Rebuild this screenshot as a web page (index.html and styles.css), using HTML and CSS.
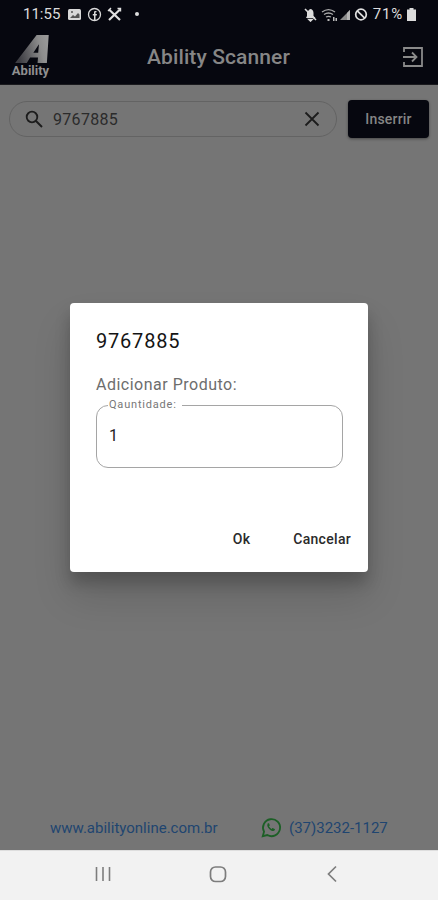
FILE: index.html
```html
<!DOCTYPE html>
<html lang="en">
<head>
    <meta charset="UTF-8">
    <title>Ability Scanner</title>
    <link rel="stylesheet" href="styles.css">
</head>
<body>
    <div class="screen">
        <div class="status-bar">
            <div class="status-left">
                <span class="clock">11:55</span>
                <svg class="st-icon" width="15" height="15" viewBox="0 0 15 15"><rect x="1" y="2" width="13" height="11" rx="1.500" fill="#d8d8d8"/><path d="M3 11l3-3 2 1.500L11 6l1.500 1.500V11z" fill="#555"/><circle cx="5" cy="5" r="1" fill="#555"/></svg>
                <svg class="st-icon" width="15" height="15" viewBox="0 0 15 15"><circle cx="7.500" cy="7.500" r="6" fill="none" stroke="#d8d8d8" stroke-width="1.300"/><path d="M9.500 4H8.200C7.400 4 7 4.600 7 5.300V7H5.800v1.600H7V13h1.500V8.600h1.200L10 7H8.500V5.600c0-.3.2-.4.500-.4h.5z" fill="#d8d8d8"/></svg>
                <svg class="st-icon" width="15" height="15" viewBox="0 0 15 15"><path d="M2 2.500L13 13M13 2.500L2 13" stroke="#e0e0e0" stroke-width="2.200"/><path d="M1 4l3-3M10.500 1.500h3v3" stroke="#e0e0e0" stroke-width="1.400" fill="none"/></svg>
                <span class="dot"></span>
            </div>
            <div class="status-right">
                <svg class="st-icon" width="15" height="15" viewBox="0 0 15 15"><path d="M7 2c2.400 0 3.500 1.700 3.500 4v3l2 2H3l1-2V5z" fill="#dcdcdc"/><path d="M6 12.500h3l-1.500 1.500zM2 2l11 11" stroke="#dcdcdc" stroke-width="1.600"/></svg>
                <svg class="st-icon wifi" width="16" height="15" viewBox="0 0 16 15"><path d="M1 5c4-3 9-3 13 0M3 7.500c3-2 6-2 9 0M5 10c2-1 3-1 5 0" stroke="#aaa" stroke-width="1.300" fill="none"/><path d="M6.500 12h2v2h-2zM12 10h1.500v4H12zM14.500 11H16v3h-1.500z" fill="#bbb"/></svg>
                <svg class="st-icon" width="11" height="15" viewBox="0 0 11 15"><path d="M0 13L10 3v10z" fill="#8c8c8c"/><path d="M7 6l3-3v10H7z" fill="#b5b5b5"/></svg>
                <svg class="st-icon" width="14" height="15" viewBox="0 0 14 15"><circle cx="7" cy="7.500" r="5.300" fill="none" stroke="#e0e0e0" stroke-width="1.700"/><path d="M3.300 3.800l7.400 7.400" stroke="#e0e0e0" stroke-width="1.700"/></svg>
                <span class="battery-text">71%</span>
                <svg class="st-icon" width="11" height="15" viewBox="0 0 11 15"><path d="M3.500 1h4v1.500H10V14H1V2.500h2.500z" fill="#dcdcdc"/></svg>
            </div>
        </div>

        <header class="app-bar">
            <div class="logo">
                <svg width="40" height="28" viewBox="0 0 40 30"><defs><linearGradient id="logoFade" x1="0" x2="1" y1="0.300" y2="0.100"><stop offset="0" stop-color="#3c3c42"/><stop offset="0.700" stop-color="#8d8d8d"/><stop offset="1" stop-color="#9b9b9b"/></linearGradient></defs><path d="M26 0h13l-2 30H27l.5-6H19l-3.500 6H3zM28.500 10l-6 9h5.200z" fill="url(#logoFade)" fill-rule="evenodd"/></svg>
                <span class="logo-text">Ability</span>
            </div>
            <h1 class="app-title">Ability Scanner</h1>
            <svg class="exit-icon" width="24" height="24" viewBox="0 0 24 24"><path d="M4 7V3h18v18H4v-4" fill="none" stroke="#8a8a8a" stroke-width="1.800"/><path d="M3 12h13M12 7.500l4.500 4.500-4.500 4.500" fill="none" stroke="#8a8a8a" stroke-width="1.800"/></svg>
        </header>

        <div class="search-row">
            <div class="search-box">
                <svg class="search-icon" width="20" height="20" viewBox="0 0 20 20"><circle cx="8" cy="8" r="5.300" fill="none" stroke="#1c1c1c" stroke-width="1.800"/><path d="M12 12l6 6" stroke="#1c1c1c" stroke-width="2"/></svg>
                <span class="search-value">9767885</span>
                <svg class="clear-icon" width="16" height="16" viewBox="0 0 16 16"><path d="M1.500 1.500l13 13M14.500 1.500l-13 13" stroke="#1c1c1c" stroke-width="1.800"/></svg>
            </div>
            <button class="insert-btn">Inserrir</button>
        </div>

        <div class="content"></div>

        <footer class="contact">
            <span class="site">www.abilityonline.com.br</span>
            <span class="phone">
                <svg width="22" height="22" viewBox="0 0 24 24"><path d="M3 21l1.400-5A9.300 9.300 0 1 1 8 19.700z" fill="none" stroke="#1c5f26" stroke-width="2"/><path d="M8.800 7.200c-.8.700-1.100 1.700-.7 2.800.8 2.200 2.800 4.300 5.200 5.200 1.200.4 2.300 0 2.900-.9.300-.5.200-1-.2-1.200l-1.700-.9c-.4-.2-.7-.1-.9.200l-.6.700c-1.300-.5-2.400-1.600-3-2.900l.6-.6c.3-.3.300-.6.200-.9l-.7-1.500c-.3-.5-1.500-.5-2.100 0z" fill="#1c5f26"/></svg>
                <span>(37)3232-1127</span>
            </span>
        </footer>

        <nav class="nav-bar">
            <svg width="18" height="18" viewBox="0 0 18 18"><path d="M2.500 2v14M9 2v14M15.500 2v14" stroke="#7d7d7d" stroke-width="1.600"/></svg>
            <svg width="18" height="18" viewBox="0 0 18 18"><rect x="1.500" y="2" width="15" height="14.500" rx="5" fill="none" stroke="#7d7d7d" stroke-width="1.700"/></svg>
            <svg width="18" height="18" viewBox="0 0 18 18"><path d="M13 1.500L5.500 9l7.500 7.500" fill="none" stroke="#7d7d7d" stroke-width="1.700"/></svg>
        </nav>

        <!-- Add product dialog -->
        <div class="dialog">
            <div class="dialog-title">9767885</div>
            <div class="dialog-label">Adicionar Produto:</div>
            <fieldset class="qty-field">
                <legend>Qauntidade:</legend>
                <span class="qty-value">1</span>
            </fieldset>
            <div class="dialog-actions">
                <button class="text-btn">Ok</button>
                <button class="text-btn">Cancelar</button>
            </div>
        </div>
    </div>
</body>
</html>
```

FILE: styles.css
```css
* {
    box-sizing: border-box;
}

body {
    margin: 0;
    font-family: Roboto, 'Liberation Sans', sans-serif;
    background: #757575;
}

.screen {
    position: relative;
    width: 438px;
    height: 900px;
    display: flex;
    flex-direction: column;
    background: #757575;
    overflow: hidden;
}

.status-bar {
    height: 30px;
    flex-shrink: 0;
    display: flex;
    justify-content: space-between;
    align-items: center;
    padding: 0 21px 2px 23px;
    background: #06070f;
    color: #dcdcdc;
}

.status-left,
.status-right {
    display: flex;
    align-items: center;
}

.status-left {
    gap: 5px;
}

.status-right {
    gap: 3px;
}

.clock {
    font-size: 15px;
    margin-right: 2px;
}

.dot {
    width: 4px;
    height: 4px;
    margin-left: 8px;
    border-radius: 50%;
    background: #dcdcdc;
}

.battery-text {
    font-size: 15px;
    letter-spacing: 0.8px;
    margin-left: 2px;
}

.app-bar {
    height: 55px;
    flex-shrink: 0;
    display: flex;
    align-items: center;
    justify-content: space-between;
    padding: 0 14px 0 10px;
    background: #06070f;
    border-bottom: 1px solid #1a1a1e;
}

.logo {
    width: 41px;
    display: flex;
    flex-direction: column;
    align-items: center;
    margin-top: -2px;
}

.logo svg {
    display: block;
}

.logo-text {
    margin-top: 1px;
    font-size: 13px;
    line-height: 13px;
    font-weight: 700;
    color: #8f8f8f;
}

.app-title {
    margin: 0 14px 0 0;
    font-size: 21px;
    font-weight: 500;
    letter-spacing: 0.1px;
    color: #868686;
}

.exit-icon {
    display: block;
}

.search-row {
    display: flex;
    align-items: center;
    gap: 11px;
    padding: 15px 9px 0 9px;
}

.search-box {
    width: 328px;
    height: 36px;
    display: flex;
    align-items: center;
    padding: 0 16px 0 14px;
    border: 1px solid #636363;
    border-radius: 18px;
}

.search-value {
    flex: 1;
    margin-left: 9px;
    font-size: 16px;
    letter-spacing: 0.3px;
    color: #2b2b2b;
}

.insert-btn {
    width: 81px;
    height: 38px;
    border: none;
    border-radius: 4px;
    background: #06070f;
    color: #858585;
    font-family: inherit;
    font-size: 14px;
    font-weight: 500;
    letter-spacing: 0.2px;
    box-shadow: 0 1px 3px rgba(0, 0, 0, 0.4);
}

.content {
    flex: 1;
}

.contact {
    height: 44px;
    flex-shrink: 0;
    display: flex;
    align-items: center;
    padding: 0 0 0 50px;
    font-size: 15px;
    color: #1f4570;
}

.site {
    width: 210px;
}

.phone {
    display: flex;
    align-items: center;
    gap: 7px;
}

.nav-bar {
    height: 50px;
    flex-shrink: 0;
    display: flex;
    justify-content: space-between;
    align-items: center;
    padding: 0 97px 4px 94px;
    background: #f2f2f2;
    border-top: 1px solid #dedede;
}

.dialog {
    position: absolute;
    left: 70px;
    top: 303px;
    width: 298px;
    height: 269px;
    padding: 26px 26px 0 26px;
    border-radius: 4px;
    background: #fff;
    box-shadow: 0 11px 15px rgba(0, 0, 0, 0.2), 0 24px 38px rgba(0, 0, 0, 0.14);
}

.dialog-title {
    font-size: 20px;
    line-height: 24px;
    letter-spacing: 0.8px;
    color: #141414;
}

.dialog-label {
    margin-top: 22px;
    font-size: 16px;
    line-height: 20px;
    letter-spacing: 0.5px;
    color: #6d6d6d;
}

.qty-field {
    width: 247px;
    height: 69px;
    margin: 4px 0 0 0;
    padding: 15px 0 0 12px;
    border: 1px solid #a5a5a5;
    border-radius: 12px;
    font-size: 16px;
    color: #222;
}

.qty-field legend {
    margin-left: -1px;
    padding: 0 5px 0 1px;
    font-size: 11px;
    line-height: 12px;
    letter-spacing: 0.8px;
    color: #777;
}

.dialog-actions {
    display: flex;
    justify-content: flex-end;
    gap: 43px;
    margin: 63px -9px 0 0;
}

.text-btn {
    padding: 0;
    border: none;
    background: none;
    font-family: inherit;
    font-size: 14px;
    font-weight: 500;
    letter-spacing: 0.3px;
    color: #2a2a2a;
}
```
